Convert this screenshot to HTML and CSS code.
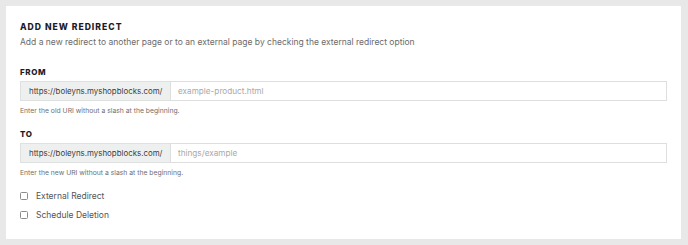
FILE: index.html
```html
<!DOCTYPE html>
<html lang="en">

<head>
    <meta charset="utf-8">
    <title>Add new redirect</title>
    <link rel="stylesheet" href="styles.css">
</head>

<body>
    <section class="panel">
        <h2 class="titel">Add new redirect</h2>
        <p class="beskrivelse">Add a new redirect to another page or to an external page by checking the external redirect option</p>

        <div class="felt">
            <label class="etiket" for="fra">From</label>
            <div class="gruppe">
                <span class="prefix">https://boleyns.myshopblocks.com/</span>
                <input id="fra" type="text" placeholder="example-product.html">
            </div>
            <p class="hjaelp">Enter the old URI without a slash at the beginning.</p>
        </div>

        <div class="felt">
            <label class="etiket" for="til">To</label>
            <div class="gruppe">
                <span class="prefix">https://boleyns.myshopblocks.com/</span>
                <input id="til" type="text" placeholder="things/example">
            </div>
            <p class="hjaelp">Enter the new URI without a slash at the beginning.</p>
        </div>

        <label class="valg"><input type="checkbox"> External Redirect</label>
        <label class="valg"><input type="checkbox"> Schedule Deletion</label>
    </section>
</body>

</html>
```

FILE: styles.css
```css
* {
    box-sizing: border-box;
}

body {
    margin: 0;
    padding: 6px 7px 6px 6px;
    background: #e8e8e8;
    font-family: 'Inter', 'Liberation Sans', sans-serif;
}

.panel {
    background: #fff;
    height: 233px;
    padding: 15px 14px 14px 14px;
}

.titel {
    margin: 0;
    font-size: 8.6px;
    font-weight: 800;
    text-transform: uppercase;
    letter-spacing: 1px;
    color: #1c1c28;
    line-height: 12px;
}

.beskrivelse {
    margin: 2px 0 0 0;
    font-size: 8.5px;
    color: #6b6b6b;
    line-height: 14px;
}

.felt {
    margin-top: 17px;
}

.felt + .felt {
    margin-top: 12px;
}

.etiket {
    display: block;
    font-size: 8px;
    font-weight: 800;
    letter-spacing: 0.6px;
    text-transform: uppercase;
    color: #1c1c28;
    line-height: 12px;
    margin-bottom: 3px;
}

.gruppe {
    display: flex;
    height: 20px;
}

.prefix {
    display: flex;
    align-items: center;
    width: 150px;
    min-width: 0;
    flex: none;
    overflow: hidden;
    padding: 0 7px 0 8px;
    background: #eef0f0;
    border: 1px solid #dfe1e1;
    border-right: none;
    font-size: 7.9px;
    color: #3d3d3d;
    white-space: nowrap;
}

.gruppe input {
    flex: 1;
    min-width: 0;
    border: 1px solid #dedede;
    padding: 0 7px;
    font-family: inherit;
    font-size: 8.2px;
    outline: none;
}

.gruppe input::placeholder {
    color: #a9a9a9;
}

.hjaelp {
    margin: 5px 0 0 0;
    font-size: 6.8px;
    color: #707070;
    line-height: 10px;
}

.valg {
    display: flex;
    align-items: center;
    gap: 8px;
    font-size: 8.5px;
    color: #555;
    margin-top: 12px;
    line-height: 12px;
}

.valg + .valg {
    margin-top: 7px;
}

.valg input {
    appearance: none;
    margin: 0;
    width: 8px;
    height: 8px;
    border: 1px solid #8c8c8c;
    border-radius: 1.5px;
    background: #fff;
}
```
